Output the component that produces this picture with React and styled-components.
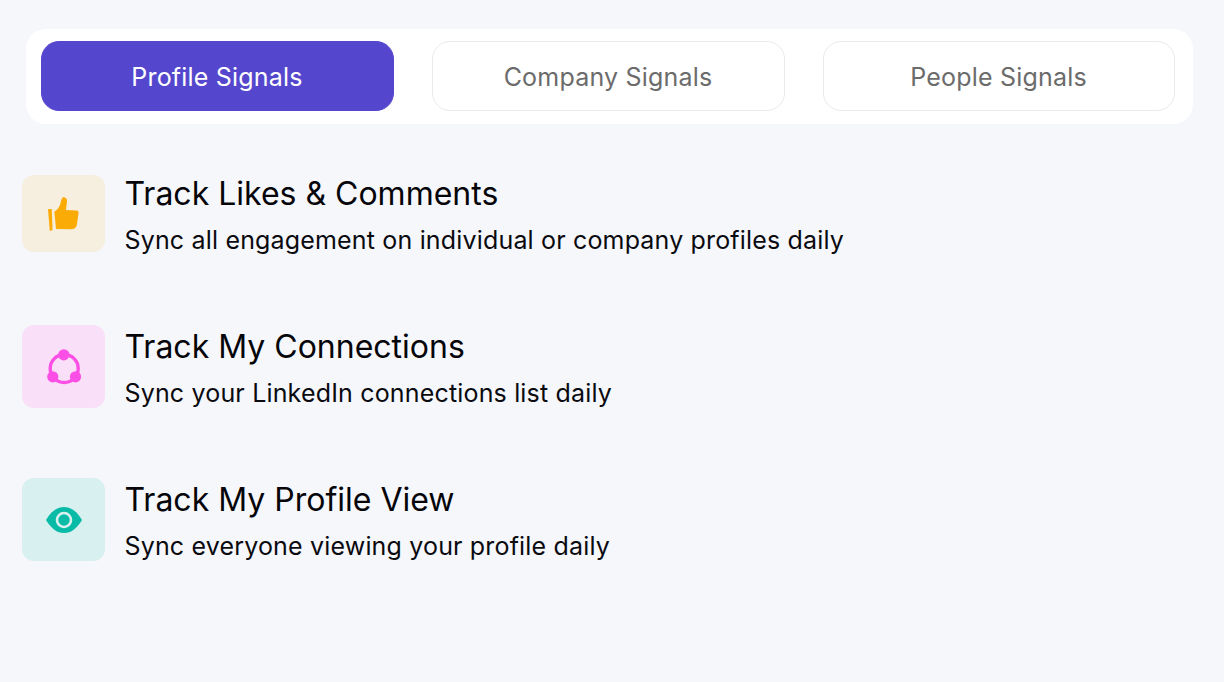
import React from "react";
import styled, { createGlobalStyle } from "styled-components";

const Global = createGlobalStyle`
  html, body { margin: 0; padding: 0; background: #f5f7fb; }
  body { font-family: Inter, "Liberation Sans", sans-serif; }
  #root { min-height: 682px; }
`;

const Page = styled.div`
  width: 1224px;
  height: 682px;
  box-sizing: border-box;
  padding: 29px 31px 0 22px;
  background: #f5f7fb;
  overflow: hidden;
`;

const TabBar = styled.div`
  display: flex;
  gap: 38px;
  margin-left: 4px;
  padding: 12px 18px 13px 15px;
  background: #fff;
  border-radius: 20px;
`;

const Tab = styled.div`
  flex: 1 1 353px;
  height: 70px;
  box-sizing: border-box;
  padding: 1px 1px 0 0;
  display: flex;
  align-items: center;
  justify-content: center;
  border-radius: 18px;
  font-size: 25px;
  letter-spacing: 0.2px;
  background: ${p => (p.$active ? "#5447cd" : "#fff")};
  color: ${p => (p.$active ? "#fff" : "#6b6b6b")};
  border: 1px solid ${p => (p.$active ? "#5447cd" : "#e9eaee")};
  &:nth-child(-n + 2) {
    flex: 0 0 353px;
  }
`;

const List = styled.div`
  display: flex;
  flex-direction: column;
  margin-top: 51px;
`;

const Row = styled.div`
  display: flex;
  align-items: flex-start;
  gap: 19.5px;
  height: ${p => p.$h}px;
`;

const IconBox = styled.div`
  width: 83px;
  height: ${p => p.$h}px;
  flex: none;
  display: flex;
  align-items: center;
  justify-content: center;
  border-radius: 12px;
  background: ${p => p.$bg};
`;

const Texts = styled.div`
  display: flex;
  flex-direction: column;
  gap: 13px;
  padding-top: ${p => p.$top}px;
`;

const Title = styled.div`
  font-size: 32px;
  line-height: 36px;
  font-weight: 425;
  color: #05050a;
`;

const Sub = styled.div`
  font-size: 25px;
  line-height: 30px;
  letter-spacing: 0.17px;
  color: #0a0a0f;
`;

const Thumb = () => (
  <svg width="31" height="34" viewBox="0 0 31 34">
    <path d="M0 12.3 L3.8 12 L4.6 33 L1.8 34 Z" fill="#fbab05" />
    <path d="M6.3 14.7 C9 13 11 10.5 12 8 C13 5 13 2 14.5 0.5 C16.5 -0.5 19 1 19 3.5 C19 7 18.2 10 18 13 L28.5 13.6 C30.5 14 30.7 15 30.5 16.5 L29 27 C28.5 30.5 27 32 24 32.3 L8 32 Z" fill="#fbab05" />
  </svg>
);

const Nodes = () => (
  <svg width="36" height="38" viewBox="0 0 36 38">
    <circle cx="18.2" cy="20.5" r="14" fill="none" stroke="#fb4fe6" strokeWidth="3.4" />
    <circle cx="17.8" cy="6.8" r="5.6" fill="#fb4fe6" />
    <circle cx="6.8" cy="28.8" r="5.6" fill="#fb4fe6" />
    <circle cx="29.5" cy="28.8" r="5.6" fill="#fb4fe6" />
  </svg>
);

const Eye = () => (
  <svg width="36" height="26" viewBox="0 0 36 26">
    <path d="M0 13 C5 4.5 11 0 18 0 C25 0 31 4.5 36 13 C31 21.5 25 26 18 26 C11 26 5 21.5 0 13 Z" fill="#07bba6" />
    <circle cx="18" cy="13" r="7" fill="#07bba6" stroke="#d8f0ef" strokeWidth="2.6" />
  </svg>
);

const items = [
  { h: 150, box: 77, top: 1, bg: "#f6efdf", Icon: Thumb, title: "Track Likes & Comments", sub: "Sync all engagement on individual or company profiles daily" },
  { h: 153, box: 83, top: 4, bg: "#f9e0f8", Icon: Nodes, title: "Track My Connections", sub: "Sync your LinkedIn connections list daily" },
  { h: 90, box: 83, top: 4, bg: "#d8f0ef", Icon: Eye, title: "Track My Profile View", sub: "Sync everyone viewing your profile daily" },
];

export default function App() {
  return (
    <Page>
      <Global />
      <TabBar>
        <Tab $active>Profile Signals</Tab>
        <Tab>Company Signals</Tab>
        <Tab>People Signals</Tab>
      </TabBar>
      <List>
        {items.map(({ h, box, top, bg, Icon, title, sub }) => (
          <Row key={title} $h={h}>
            <IconBox $h={box} $bg={bg}><Icon /></IconBox>
            <Texts $top={top}>
              <Title>{title}</Title>
              <Sub>{sub}</Sub>
            </Texts>
          </Row>
        ))}
      </List>
    </Page>
  );
}
